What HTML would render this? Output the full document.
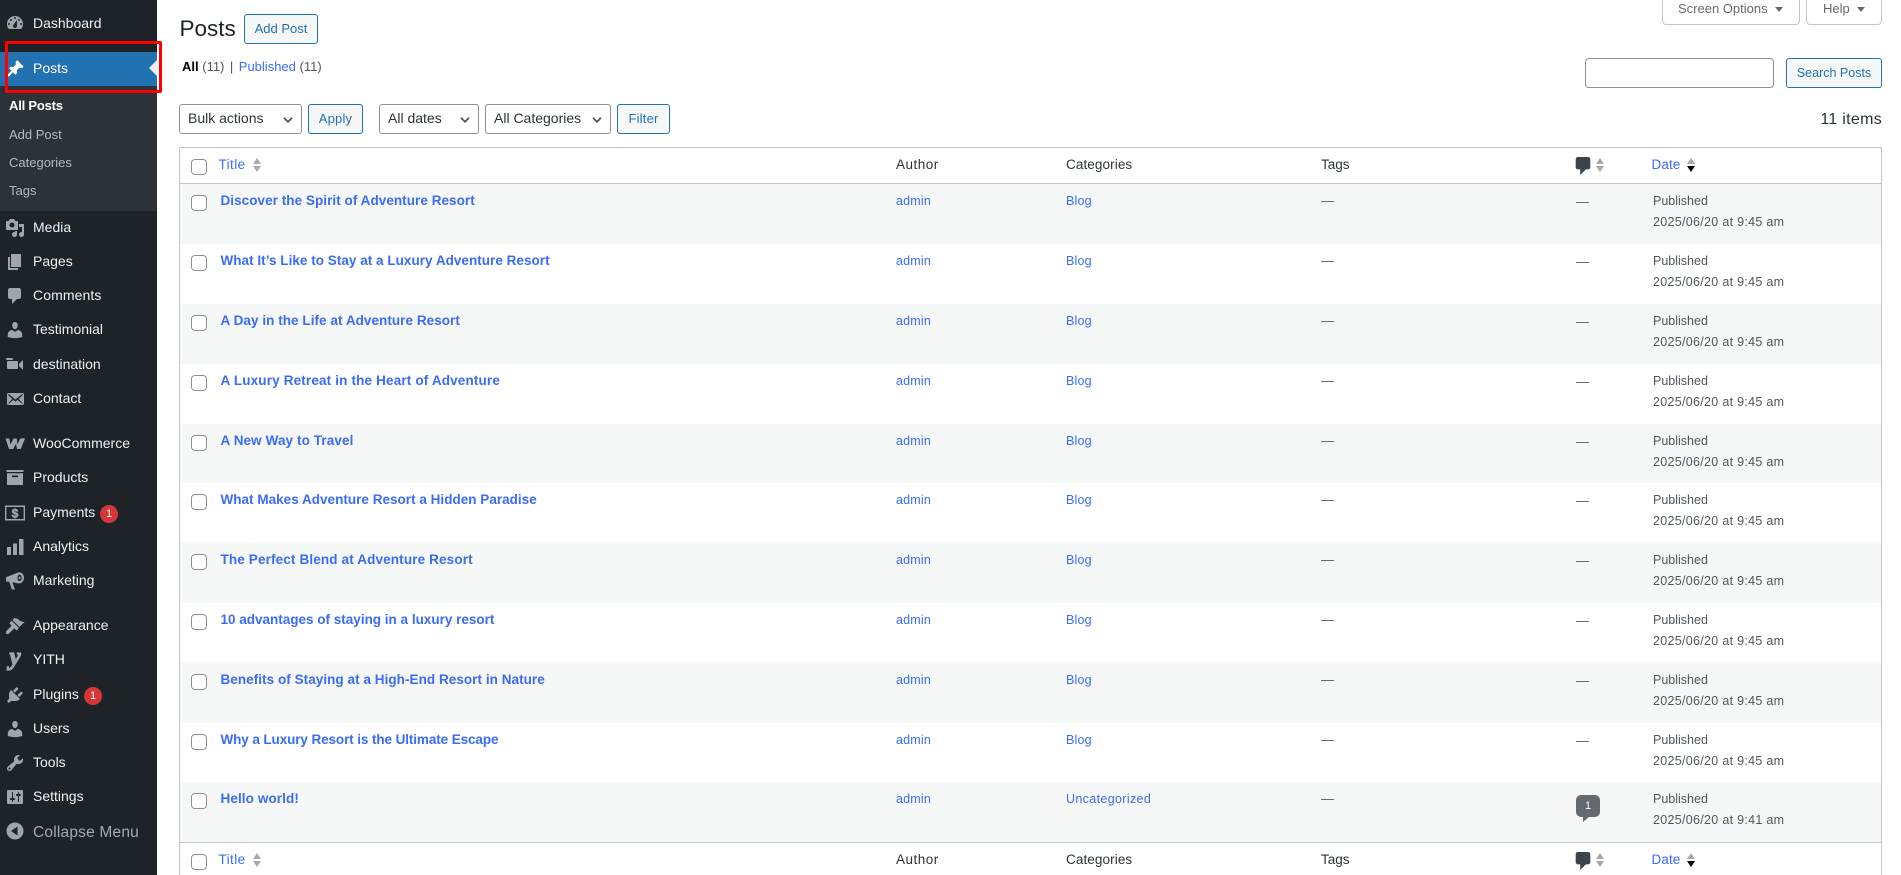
<!DOCTYPE html>
<html><head><meta charset="utf-8"><title>Posts</title>
<style>
html,body{margin:0;padding:0;background:#fff}
body{width:1901px;height:875px;overflow:hidden;position:relative;font-family:"Liberation Sans",sans-serif;font-size:13px;color:#3c434a}
*{box-sizing:border-box}
.a{position:absolute;white-space:nowrap}
#side{position:absolute;left:0;top:0;width:157px;height:875px;background:#1d2327}
#sub{position:absolute;left:0;top:86px;width:157px;height:125px;background:#2c3338}
#act{position:absolute;left:0;top:52px;width:157px;height:34px;background:#2271b1}
#arr{position:absolute;left:149px;top:60px;width:0;height:0;border:8px solid transparent;border-right-color:#f0f0f1;border-left:0}
#red{position:absolute;left:5px;top:41px;width:157px;height:52px;border:3px solid #f00;border-radius:2px}
.m{position:absolute;left:33px;color:#f0f0f1;font-size:14px;line-height:20px;white-space:nowrap}
.s{position:absolute;left:9px;color:#b4b9be;font-size:13px;line-height:20px;white-space:nowrap}
.i{position:absolute;left:5px;width:20px;height:20px;fill:#a0a5aa}
.b{position:absolute;width:18px;height:18px;border-radius:9px;background:#d63638;color:#fff;font-size:11px;line-height:18px;text-align:center}
.btn{position:absolute;border:1px solid #2271b1;background:#f6f7f7;color:#2271b1;border-radius:3px;text-align:center;font-size:13px;line-height:28px;height:30px}
.sel{position:absolute;border:1px solid #8c8f94;background:#fff;color:#2c3338;border-radius:3px;font-size:14px;line-height:26px;height:30px;padding-left:8px;white-space:nowrap}
.sel svg{position:absolute;top:12px;right:8px;width:10px;height:6px;fill:none;stroke:#50575e;stroke-width:1.8}
.tab{position:absolute;top:-6px;height:30.5px;border:1px solid #c3c4c7;border-radius:0 0 4px 4px;background:#fff;color:#646970;font-size:13px;line-height:28px;padding-top:0}
.tri{position:absolute;width:0;height:0;border-left:4px solid transparent;border-right:4px solid transparent;border-top:5px solid #646970}
.cb{position:absolute;left:191px;width:16px;height:16px;border:1px solid #8c8f94;border-radius:4px;background:#fff}
.r{position:absolute;left:180px;width:1701px;height:60px}
.alt{background:#f6f7f7}
.r .cb{left:11px;top:11px}
.t{position:absolute;left:40.5px;top:7px;line-height:20px;color:#3a6cf4;font-weight:bold;font-size:13.5px;letter-spacing:.05px;white-space:nowrap}
.l{position:absolute;top:7px;line-height:20px;color:#3a6cf4;white-space:nowrap;font-size:12.5px;letter-spacing:.2px}
.g{position:absolute;top:7px;line-height:20px;color:#50575e;white-space:nowrap}
.d{position:absolute;left:1396px;top:8px;color:#50575e;line-height:20px;font-size:13px}
.d2{position:absolute;left:1473px;top:7px;color:#50575e;line-height:20px;font-size:12.5px;white-space:nowrap}
.d3{position:absolute;left:1473px;top:28px;color:#50575e;line-height:20px;font-size:12.5px;letter-spacing:.3px;white-space:nowrap}
.h{position:absolute;font-size:13.5px;line-height:20px;color:#2c3338;white-space:nowrap}
.hl{color:#3a6cf4}
.su,.sd{position:absolute;width:0;height:0;border-left:4px solid transparent;border-right:4px solid transparent}
.su{border-bottom:6px solid #a7aaad}
.sd{border-top:6px solid #a7aaad}
</style></head><body>

<div id="side"></div><div id="sub"></div><div id="act"></div><div id="arr"></div>

<svg class="i" style="top:13px" viewBox="0 0 20 20"><path fill-rule="evenodd" d="M3.76 16h12.48c1.1-1.37 1.76-3.11 1.76-5 0-4.42-3.58-8-8-8s-8 3.58-8 8c0 1.89.66 3.63 1.76 5zM10 4c.55 0 1 .45 1 1s-.45 1-1 1-1-.45-1-1 .45-1 1-1zM6 6c.55 0 1 .45 1 1s-.45 1-1 1-1-.45-1-1 .45-1 1-1zm8 0c.55 0 1 .45 1 1s-.45 1-1 1-1-.45-1-1 .45-1 1-1zm-5.37 5.55L12 7v6c0 1.1-.9 2-2 2s-2-.9-2-2c0-.57.24-1.08.63-1.45zM4 10c.55 0 1 .45 1 1s-.45 1-1 1-1-.45-1-1 .45-1 1-1zm12 0c.55 0 1 .45 1 1s-.45 1-1 1-1-.45-1-1 .45-1 1-1z"/></svg>
<div class="m" style="top:13px">Dashboard</div>
<svg class="i" style="top:59px;fill:#fff" viewBox="0 0 20 20"><path d="M10.44 3.02l1.82-1.82 6.36 6.35-1.83 1.82c-1.05-.68-2.48-.57-3.41.36l-.75.75c-.92.93-1.04 2.35-.35 3.41l-1.83 1.82-2.41-2.41-2.8 2.79c-.42.42-3.38 2.71-3.8 2.29s1.86-3.39 2.28-3.81l2.79-2.79L4.1 9.36l1.83-1.82c1.05.69 2.48.57 3.4-.36l.75-.75c.93-.92 1.05-2.35.36-3.41z"/></svg>
<div class="m" style="top:58px;color:#fff">Posts</div>
<div class="s" style="top:96px;color:#fff;font-weight:bold;letter-spacing:-.2px">All Posts</div>
<div class="s" style="top:125px">Add Post</div>
<div class="s" style="top:153px">Categories</div>
<div class="s" style="top:181px">Tags</div>

<svg class="i" style="top:218px" viewBox="0 0 20 20"><path fill-rule="evenodd" d="M13 11V4c0-.55-.45-1-1-1h-1.67L9 1H5L3.67 3H2c-.55 0-1 .45-1 1v7c0 .55.45 1 1 1h10c.55 0 1-.45 1-1zM7 4.5c1.38 0 2.5 1.12 2.5 2.5S8.38 9.5 7 9.5 4.5 8.38 4.5 7 5.62 4.5 7 4.5zM14 6h5v10.5c0 1.38-1.12 2.5-2.5 2.5S14 17.88 14 16.5s1.12-2.5 2.5-2.5c.17 0 .34.02.5.05V9h-3V6zm-4 8.05V13h2v3.5c0 1.38-1.12 2.5-2.5 2.5S7 17.88 7 16.5 8.12 14 9.5 14c.17 0 .34.02.5.05z"/></svg>
<div class="m" style="top:217px">Media</div>
<svg class="i" style="top:252px" viewBox="0 0 20 20"><path d="M6 15V2h10v13H6zm-1 1h8v2H3V5h2v11z"/></svg>
<div class="m" style="top:251px">Pages</div>
<svg class="i" style="top:286px" viewBox="0 0 20 20"><path d="M5 2h9c1.1 0 2 .9 2 2v7c0 1.1-.9 2-2 2h-2l-5 5v-5H5c-1.1 0-2-.9-2-2V4c0-1.1.9-2 2-2z"/></svg>
<div class="m" style="top:285px;letter-spacing:.1px">Comments</div>
<svg class="i" style="top:320px" viewBox="0 0 20 20"><path d="M10 9.25c-2.27 0-2.73-3.44-2.73-3.44C7 4.02 7.82 2 9.97 2c2.16 0 2.98 2.02 2.71 3.81 0 0-.41 3.44-2.68 3.44zm0 2.57L12.72 10c2.39 0 4.52 2.33 4.52 4.53v2.49s-3.65 1.13-7.24 1.13c-3.65 0-7.24-1.13-7.24-1.13v-2.49c0-2.25 1.94-4.48 4.47-4.48z"/></svg>
<div class="m" style="top:319px">Testimonial</div>
<svg class="i" style="top:354px" viewBox="0 0 20 20"><path d="M8 5c0-.55-.45-1-1-1H2c-.55 0-1 .45-1 1 0 .57.49 1 1 1h5c.55 0 1-.45 1-1zm6 5l4-4v10l-4-4v-2zm-1 4V8c0-.55-.45-1-1-1H3c-.55 0-1 .45-1 1v6c0 .55.45 1 1 1h9c.55 0 1-.45 1-1z"/></svg>
<div class="m" style="top:354px">destination</div>
<svg class="i" style="top:389px" viewBox="0 0 20 20"><path fill-rule="evenodd" d="M19 14.5v-9c0-.83-.67-1.5-1.5-1.5H3.49c-.83 0-1.5.67-1.5 1.5v9c0 .83.67 1.5 1.5 1.5H17.5c.83 0 1.5-.67 1.5-1.5zm-1.31-9.11c.33.33.15.67-.03.84L13.6 9.95l3.9 4.06c.12.14.2.36.06.51-.13.16-.43.15-.56.05l-4.37-3.73-2.14 1.95-2.13-1.95-4.37 3.73c-.13.1-.43.11-.56-.05-.14-.15-.06-.37.06-.51l3.9-4.06-4.06-3.72c-.18-.17-.36-.51-.03-.84s.67-.17.95.07l6.24 5.04 6.25-5.04c.28-.24.62-.4.95-.07z"/></svg>
<div class="m" style="top:388px">Contact</div>

<svg class="i" style="top:434px" viewBox="0 0 20 20"><path d="M.5 4.500h3.800l1.200 6 3-6h3.200l.8 6 2.300-5.200c.8-1.100 3.700-1.200 5.200-.8l-4.300 10.500h-3.700l-1-5.200-2.800 5.200H4z"/></svg>
<div class="m" style="top:433px">WooCommerce</div>
<svg class="i" style="top:468px" viewBox="0 0 20 20"><path fill-rule="evenodd" d="M1.5 2h17v2h-17zM2 5.3h16V17H2zM7 7.5v1.6h6V7.5z"/></svg>
<div class="m" style="top:467px">Products</div>
<svg class="i" style="top:503px" viewBox="0 0 20 20"><path fill-rule="evenodd" d="M0 2.500h20v15H0zM1.400 4v12h17.200V4z"/><text x="10" y="14.500" text-anchor="middle" font-family="Liberation Sans,sans-serif" font-weight="bold" font-size="12" stroke="#a0a5aa" stroke-width=".5">$</text></svg>
<div class="m" style="top:502px">Payments</div>
<div class="b" style="left:100px;top:505px">1</div>
<svg class="i" style="top:537px" viewBox="0 0 20 20"><path d="M2 10h4v8H2zM8 6.5h4V18H8zM14 2h4.5v16H14z"/></svg>
<div class="m" style="top:536px">Analytics</div>
<svg class="i" style="top:571px" viewBox="0 0 20 20"><path fill-rule="evenodd" d="M13 1.500c3.300-.8 6 1.800 6 5.300s-2.700 6.300-6 5.600L7.400 11.200 10 18.500H6.800L4.300 10.800 1 10.500V6.300zM14.600 3.700c-1.200 0-2.100 1.400-2.100 3.200s.9 3.200 2.100 3.200 2.100-1.400 2.100-3.200-.9-3.200-2.100-3.200zM14.600 5.500c.6 0 1 .6 1 1.400s-.4 1.400-1 1.400-1-.6-1-1.400.4-1.400 1-1.400z"/></svg>
<div class="m" style="top:570px">Marketing</div>

<svg class="i" style="top:616px" viewBox="0 0 20 20"><path d="M14.480 11.060L7.410 3.990l1.500-1.500c.5-.56 2.300-.47 3.510.32 1.210.8 1.430 1.280 2.910 2.100 1.180.64 2.450 1.260 4.450.85zm-.71.71L6.700 4.700 4.930 6.470c-.39.39-.39 1.020 0 1.410l1.060 1.060c.39.39.39 1.030 0 1.420l-4.400 4.400c-1 1-1 2.200-.3 2.900s1.900.7 2.900-.3l4.400-4.400c.39-.39 1.030-.39 1.420 0l1.060 1.060c.39.39 1.020.39 1.410 0z"/></svg>
<div class="m" style="top:615px">Appearance</div>
<svg class="i" style="top:650px;overflow:visible" viewBox="0 0 20 20"><text x="10" y="14.500" text-anchor="middle" font-family="Liberation Serif,serif" font-weight="bold" font-style="italic" font-size="25" stroke="#a0a5aa" stroke-width="1.300">y</text></svg>
<div class="m" style="top:649px">YITH</div>
<svg class="i" style="top:685px" viewBox="0 0 20 20"><path d="M13.110 4.360L9.870 7.600 8 5.730l3.240-3.240c.35-.34 1.050-.2 1.560.32.52.51.66 1.210.31 1.550zm-8 1.770l.91-1.120 9.010 9.010-1.190.84c-.71.71-2.630 1.160-3.820 1.160H6.140L4.900 17.260c-.59.59-1.540.59-2.120 0-.59-.58-.59-1.530 0-2.120l1.240-1.240v-3.880c0-1.130.4-3.190 1.090-3.890zm7.260 3.970l3.240-3.240c.34-.35 1.040-.21 1.550.31.52.51.66 1.210.31 1.550l-3.240 3.250z"/></svg>
<div class="m" style="top:684px">Plugins</div>
<div class="b" style="left:84px;top:687px">1</div>
<svg class="i" style="top:719px" viewBox="0 0 20 20"><path d="M10 9.250c-2.270 0-2.730-3.440-2.730-3.440C7 4.020 7.820 2 9.970 2c2.160 0 2.980 2.020 2.710 3.810 0 0-.41 3.440-2.680 3.440zm0 2.570L12.720 10c2.390 0 4.520 2.330 4.520 4.530v2.490s-3.650 1.130-7.240 1.130c-3.650 0-7.240-1.130-7.240-1.130v-2.490c0-2.250 1.940-4.480 4.470-4.480z"/></svg>
<div class="m" style="top:718px">Users</div>
<svg class="i" style="top:753px" viewBox="0 0 20 20"><path fill-rule="evenodd" d="M16.680 9.770c-1.340 1.340-3.300 1.670-4.950.99l-5.410 6.520c-.99.99-2.590.99-3.580 0s-.99-2.590 0-3.570l6.520-5.420c-.68-1.650-.35-3.610.99-4.950 1.280-1.280 3.120-1.620 4.720-1.060l-2.890 2.890 2.820 2.820 2.860-2.870c.53 1.580.18 3.390-1.080 4.650zM3.810 16.210c.4.39 1.040.39 1.430 0 .4-.4.4-1.040 0-1.430-.39-.4-1.030-.4-1.430 0-.39.39-.39 1.030 0 1.430z"/></svg>
<div class="m" style="top:752px">Tools</div>
<svg class="i" style="top:787px" viewBox="0 0 20 20"><path fill-rule="evenodd" d="M18 16V4c0-.55-.45-1-1-1H3c-.55 0-1 .45-1 1v12c0 .55.45 1 1 1h14c.55 0 1-.45 1-1zM8 11h1c.55 0 1 .45 1 1s-.45 1-1 1H8v1.500c0 .28-.22.5-.5.5s-.5-.22-.5-.5V13H6c-.55 0-1-.45-1-1s.45-1 1-1h1V5.500c0-.28.22-.5.5-.5s.5.22.5.5V11zm5-2h-1c-.55 0-1-.45-1-1s.45-1 1-1h1V5.500c0-.28.22-.5.5-.5s.5.22.5.5V7h1c.55 0 1 .45 1 1s-.45 1-1 1h-1v5.500c0 .28-.22.5-.5.5s-.5-.22-.5-.5V9z"/></svg>
<div class="m" style="top:786px">Settings</div>
<svg class="i" style="top:821px" viewBox="0 0 20 20"><path fill-rule="evenodd" d="M10 1.500a8.500 8.500 0 1 0 0 17 8.500 8.500 0 0 0 0-17zM12.500 5.500v9L6 10z"/></svg>
<div class="m" style="top:823px;color:#a7aaad;font-size:15.500px;letter-spacing:.2px">Collapse Menu</div>
<div id="red"></div>

<div class="tab" style="left:1662px;width:138px;padding-left:15px">Screen Options</div><div class="tri" style="left:1775px;top:7px"></div>
<div class="tab" style="left:1806px;width:76px;padding-left:16px">Help</div><div class="tri" style="left:1857px;top:7px"></div>

<div class="a" style="left:179.500px;top:14px;font-size:22.500px;line-height:29px;color:#1d2327">Posts</div>
<div class="btn" style="left:244px;top:14px;width:74px">Add Post</div>
<div class="a" style="left:182px;top:57px;line-height:20px;color:#50575e;font-size:13px"><b style="color:#000">All</b> (11)<span style="margin:0 5.500px">|</span><span class="hl">Published</span> (11)</div>

<div style="position:absolute;left:1585px;top:58px;width:189px;height:30px;border:1px solid #8c8f94;border-radius:4px;background:#fff"></div>
<div class="btn" style="left:1786px;top:58px;width:96px;font-size:12.500px">Search Posts</div>

<div class="sel" style="left:179px;top:104px;width:123px">Bulk actions<svg viewBox="0 0 10 6"><path d="M1 .8l4 4 4-4"/></svg></div>
<div class="btn" style="left:308px;top:104px;width:55px;letter-spacing:.2px">Apply</div>
<div class="sel" style="left:379px;top:104px;width:100px">All dates<svg viewBox="0 0 10 6"><path d="M1 .8l4 4 4-4"/></svg></div>
<div class="sel" style="left:485px;top:104px;width:126px">All Categories<svg viewBox="0 0 10 6"><path d="M1 .8l4 4 4-4"/></svg></div>
<div class="btn" style="left:617px;top:104px;width:53px;letter-spacing:.2px">Filter</div>
<div class="a" style="right:19px;top:110px;font-size:16px;letter-spacing:.3px;line-height:20px;color:#2c3338">11 items</div>

<div style="position:absolute;left:179px;top:147px;width:1703px;height:728px;border:1px solid #c3c4c7;border-bottom:0"></div>
<div style="position:absolute;left:180px;top:183px;width:1701px;height:1px;background:#c3c4c7"></div>

<!-- header -->
<div class="cb" style="top:159px"></div>
<div class="h hl" style="left:218.500px;top:155px;letter-spacing:.4px">Title</div>
<div class="su" style="left:253px;top:158px"></div><div class="sd" style="left:253px;top:166px"></div>
<div class="h" style="left:896px;top:155px;letter-spacing:.5px">Author</div>
<div class="h" style="left:1066px;top:155px;letter-spacing:.1px">Categories</div>
<div class="h" style="left:1321px;top:155px">Tags</div>
<svg style="position:absolute;left:1575px;top:157px;width:16px;height:18px;fill:#3c434a" viewBox="3 2 13 16"><path d="M5 2h9c1.100 0 2 .9 2 2v7c0 1.100-.9 2-2 2h-2l-5 5v-5H5c-1.100 0-2-.9-2-2V4c0-1.100.9-2 2-2z"/></svg>
<div class="su" style="left:1596px;top:158px"></div><div class="sd" style="left:1596px;top:166px"></div>
<div class="h hl" style="left:1651.500px;top:155px;letter-spacing:.1px">Date</div>
<div class="su" style="left:1687px;top:158px"></div><div class="sd" style="left:1687px;top:166px;border-top-color:#000"></div>

<!-- rows -->
<div class="r alt" style="top:184px"><div class="cb"></div><div class="t">Discover the Spirit of Adventure Resort</div><div class="l" style="left:716px">admin</div><div class="l" style="left:886px">Blog</div><div class="g" style="left:1141px">—</div><div class="d">—</div><div class="d2">Published</div><div class="d3">2025/06/20 at 9:45 am</div></div>
<div class="r" style="top:244px"><div class="cb"></div><div class="t" style="letter-spacing:.03px">What It’s Like to Stay at a Luxury Adventure Resort</div><div class="l" style="left:716px">admin</div><div class="l" style="left:886px">Blog</div><div class="g" style="left:1141px">—</div><div class="d">—</div><div class="d2">Published</div><div class="d3">2025/06/20 at 9:45 am</div></div>
<div class="r alt" style="top:304px"><div class="cb"></div><div class="t">A Day in the Life at Adventure Resort</div><div class="l" style="left:716px">admin</div><div class="l" style="left:886px">Blog</div><div class="g" style="left:1141px">—</div><div class="d">—</div><div class="d2">Published</div><div class="d3">2025/06/20 at 9:45 am</div></div>
<div class="r" style="top:364px"><div class="cb"></div><div class="t" style="letter-spacing:.16px">A Luxury Retreat in the Heart of Adventure</div><div class="l" style="left:716px">admin</div><div class="l" style="left:886px">Blog</div><div class="g" style="left:1141px">—</div><div class="d">—</div><div class="d2">Published</div><div class="d3">2025/06/20 at 9:45 am</div></div>
<div class="r alt" style="top:424px;height:59px"><div class="cb"></div><div class="t" style="letter-spacing:.1px">A New Way to Travel</div><div class="l" style="left:716px">admin</div><div class="l" style="left:886px">Blog</div><div class="g" style="left:1141px">—</div><div class="d">—</div><div class="d2">Published</div><div class="d3">2025/06/20 at 9:45 am</div></div>
<div class="r" style="top:483px"><div class="cb"></div><div class="t" style="letter-spacing:.02px">What Makes Adventure Resort a Hidden Paradise</div><div class="l" style="left:716px">admin</div><div class="l" style="left:886px">Blog</div><div class="g" style="left:1141px">—</div><div class="d">—</div><div class="d2">Published</div><div class="d3">2025/06/20 at 9:45 am</div></div>
<div class="r alt" style="top:543px"><div class="cb"></div><div class="t" style="letter-spacing:.14px">The Perfect Blend at Adventure Resort</div><div class="l" style="left:716px">admin</div><div class="l" style="left:886px">Blog</div><div class="g" style="left:1141px">—</div><div class="d">—</div><div class="d2">Published</div><div class="d3">2025/06/20 at 9:45 am</div></div>
<div class="r" style="top:603px"><div class="cb"></div><div class="t" style="letter-spacing:0">10 advantages of staying in a luxury resort</div><div class="l" style="left:716px">admin</div><div class="l" style="left:886px">Blog</div><div class="g" style="left:1141px">—</div><div class="d">—</div><div class="d2">Published</div><div class="d3">2025/06/20 at 9:45 am</div></div>
<div class="r alt" style="top:663px"><div class="cb"></div><div class="t" style="letter-spacing:.05px">Benefits of Staying at a High-End Resort in Nature</div><div class="l" style="left:716px">admin</div><div class="l" style="left:886px">Blog</div><div class="g" style="left:1141px">—</div><div class="d">—</div><div class="d2">Published</div><div class="d3">2025/06/20 at 9:45 am</div></div>
<div class="r" style="top:723px;height:59px"><div class="cb"></div><div class="t" style="letter-spacing:-.1px">Why a Luxury Resort is the Ultimate Escape</div><div class="l" style="left:716px">admin</div><div class="l" style="left:886px">Blog</div><div class="g" style="left:1141px">—</div><div class="d">—</div><div class="d2">Published</div><div class="d3">2025/06/20 at 9:45 am</div></div>
<div class="r alt" style="top:782px"><div class="cb"></div><div class="t" style="letter-spacing:.1px">Hello world!</div><div class="l" style="left:716px">admin</div><div class="l" style="left:886px;letter-spacing:.35px">Uncategorized</div><div class="g" style="left:1141px">—</div>
<div style="position:absolute;left:1396px;top:13px;width:24px;height:22px;border-radius:5px;background:#646970;color:#fff;font-size:11px;line-height:22px;text-align:center">1</div>
<svg style="position:absolute;left:1403px;top:34px;width:7px;height:6px;fill:#646970" viewBox="0 0 7 6"><path d="M0 0h7L0 6z"/></svg>
<div class="d2">Published</div><div class="d3">2025/06/20 at 9:41 am</div></div>

<!-- footer -->
<div style="position:absolute;left:180px;top:842px;width:1701px;height:1px;background:#c3c4c7"></div>
<div class="cb" style="top:854px"></div>
<div class="h hl" style="left:218.500px;top:850px;letter-spacing:.4px">Title</div>
<div class="su" style="left:253px;top:853px"></div><div class="sd" style="left:253px;top:861px"></div>
<div class="h" style="left:896px;top:850px;letter-spacing:.5px">Author</div>
<div class="h" style="left:1066px;top:850px;letter-spacing:.1px">Categories</div>
<div class="h" style="left:1321px;top:850px">Tags</div>
<svg style="position:absolute;left:1575px;top:852px;width:16px;height:18px;fill:#3c434a" viewBox="3 2 13 16"><path d="M5 2h9c1.100 0 2 .9 2 2v7c0 1.100-.9 2-2 2h-2l-5 5v-5H5c-1.100 0-2-.9-2-2V4c0-1.100.9-2 2-2z"/></svg>
<div class="su" style="left:1596px;top:853px"></div><div class="sd" style="left:1596px;top:861px"></div>
<div class="h hl" style="left:1651.500px;top:850px;letter-spacing:.1px">Date</div>
<div class="su" style="left:1687px;top:853px"></div><div class="sd" style="left:1687px;top:861px;border-top-color:#000"></div>

</body></html>
